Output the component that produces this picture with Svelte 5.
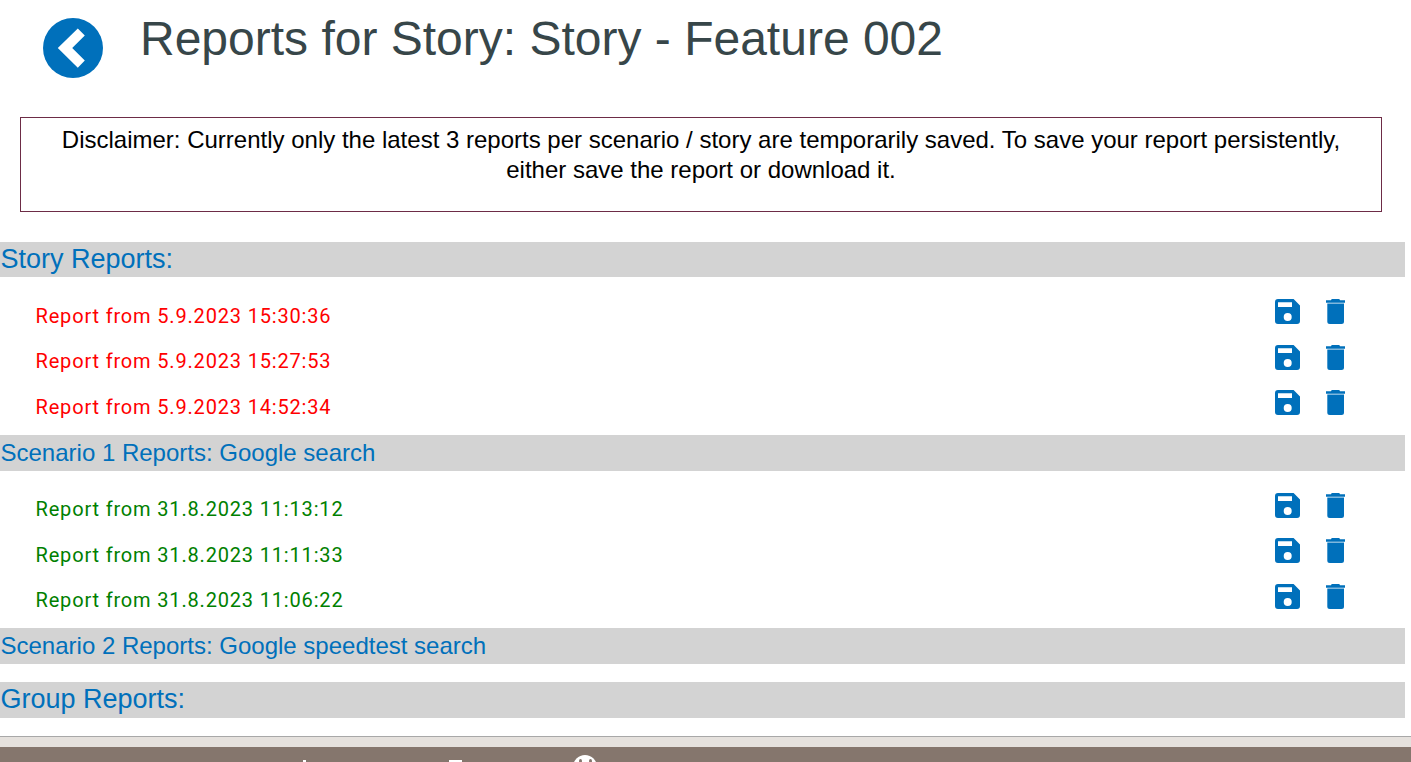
<script>
  const groups = [
    {
      title: 'Story Reports:',
      big: true,
      status: 'failed',
      reports: ['5.9.2023 15:30:36', '5.9.2023 15:27:53', '5.9.2023 14:52:34']
    },
    {
      title: 'Scenario 1 Reports: Google search',
      status: 'passed',
      reports: ['31.8.2023 11:13:12', '31.8.2023 11:11:33', '31.8.2023 11:06:22']
    },
    {
      title: 'Scenario 2 Reports: Google speedtest search',
      status: 'passed',
      reports: []
    }
  ];
</script>

<div class="page">
  <header class="head">
    <button class="back" aria-label="Back">
      <svg viewBox="0 0 60 60" width="60" height="60">
        <circle cx="30" cy="30" r="30" fill="#0070bb" />
        <path d="M34.8 10.5 L41.8 17.5 L29.2 30 L41.8 42.5 L34.8 49.8 L14.8 30 Z" fill="#fff" />
      </svg>
    </button>
    <h1>Reports for Story: Story - Feature 002</h1>
  </header>

  <div class="disclaimer">
    Disclaimer: Currently only the latest 3 reports per scenario / story are temporarily saved. To save your report persistently, either save the report or download it.
  </div>

  {#each groups as group}
    <h2 class="bar" class:big={group.big}>{group.title}</h2>
    {#if group.reports.length}
      <ul class="reports">
        {#each group.reports as report}
          <li class={group.status}>
            <span class="label">Report from {report}</span>
            <span class="actions">
              <svg class="icon" viewBox="0 0 25 25" width="25" height="25" aria-label="Save">
                <path fill-rule="evenodd" d="M3 0 H18.6 L25 6.5 V22 A3 3 0 0 1 22 25 H3 A3 3 0 0 1 0 22 V3 A3 3 0 0 1 3 0 Z M3 3.3 V8 H17 V3.3 Z M12.7 14 A4 4 0 1 0 12.7 22 A4 4 0 1 0 12.7 14 Z" />
              </svg>
              <svg class="icon" viewBox="0 0 19 25" width="19" height="25" aria-label="Delete">
                <path d="M5.7 0 H13.3 L14 1.3 H19 V3.7 H0 V1.3 H5 Z M1.3 4.6 H18 V22.5 A2.5 2.5 0 0 1 15.5 25 H3.8 A2.5 2.5 0 0 1 1.3 22.5 Z" />
              </svg>
            </span>
          </li>
        {/each}
      </ul>
    {:else}
      <div class="empty"></div>
    {/if}
  {/each}

  <h2 class="bar big">Group Reports:</h2>

  <footer class="foot">
    <div class="foot-strip"></div>
    <div class="foot-main">
      <span class="tip tip-a"></span>
      <span class="tip tip-b"></span>
      <span class="tip tip-c">
        <span class="eye"></span>
        <span class="eye"></span>
      </span>
    </div>
  </footer>
</div>

<style>
  :global(body) {
    margin: 0;
    background: #fff;
    overflow: hidden;
  }

  .page {
    height: 762px;
    overflow: hidden;
    font-family: "Liberation Sans", Arial, sans-serif;
  }

  .head {
    display: flex;
    align-items: flex-start;
    height: 117px;
    padding-left: 42.5px;
    box-sizing: border-box;
  }

  .back {
    border: 0;
    background: none;
    padding: 0;
    margin-top: 17.5px;
    width: 60px;
    height: 60px;
    cursor: pointer;
  }

  .back svg {
    display: block;
  }

  h1 {
    margin: 11px 0 0 37.5px;
    font-size: 48px;
    font-weight: 400;
    line-height: 55px;
    color: #374649;
  }

  .disclaimer {
    margin: 0 29px 0 20px;
    height: 95px;
    box-sizing: border-box;
    border: 1px solid #6d2c46;
    padding: 7px 40px 0;
    font-size: 24px;
    line-height: 30px;
    text-align: center;
    color: #000;
  }

  .bar {
    margin: 0 6px 0 0;
    padding-left: 0.5px;
    height: 36px;
    background: #d3d3d3;
    color: #0070bb;
    font-size: 24px;
    font-weight: 400;
    line-height: 36px;
  }

  .bar.big {
    font-size: 27px;
    line-height: 35px;
  }

  .disclaimer + .bar {
    margin-top: 30px;
    height: 35px;
  }

  .reports {
    list-style: none;
    margin: 0;
    padding: 12px 0 0;
    height: 157.5px;
    box-sizing: border-box;
    width: 1405px;
  }

  .reports li {
    display: flex;
    justify-content: space-between;
    align-items: center;
    height: 45.5px;
    padding-left: 35.5px;
    font-family: Roboto, sans-serif;
    font-size: 20px;
    letter-spacing: 0.83px;
  }

  .failed {
    color: #ff0000;
  }

  .passed {
    color: #008000;
  }

  .label {
    position: relative;
    top: 4px;
  }

  .actions {
    display: flex;
    align-items: center;
    gap: 26px;
    padding-right: 60px;
  }

  .icon {
    display: block;
    fill: #0070bb;
  }

  .empty {
    height: 18px;
  }

  .foot {
    margin-top: 18px;
    border-top: 1px solid #a8a8a8;
  }

  .foot-strip {
    height: 10px;
    background: #e5e1dd;
  }

  .foot-main {
    position: relative;
    height: 40px;
    background: #85766d;
  }

  .tip {
    position: absolute;
    background: #fff;
  }

  .tip-a {
    left: 303px;
    top: 13px;
    width: 3px;
    height: 3px;
  }

  .tip-b {
    left: 449px;
    top: 13px;
    width: 13px;
    height: 3px;
  }

  .tip-c {
    left: 573px;
    top: 8px;
    width: 24px;
    height: 24px;
    border-radius: 50%;
    display: flex;
    justify-content: center;
    gap: 7px;
    padding-top: 4px;
    box-sizing: border-box;
  }

  .eye {
    width: 3px;
    height: 4px;
    border-radius: 50%;
    background: #85766d;
  }
</style>
